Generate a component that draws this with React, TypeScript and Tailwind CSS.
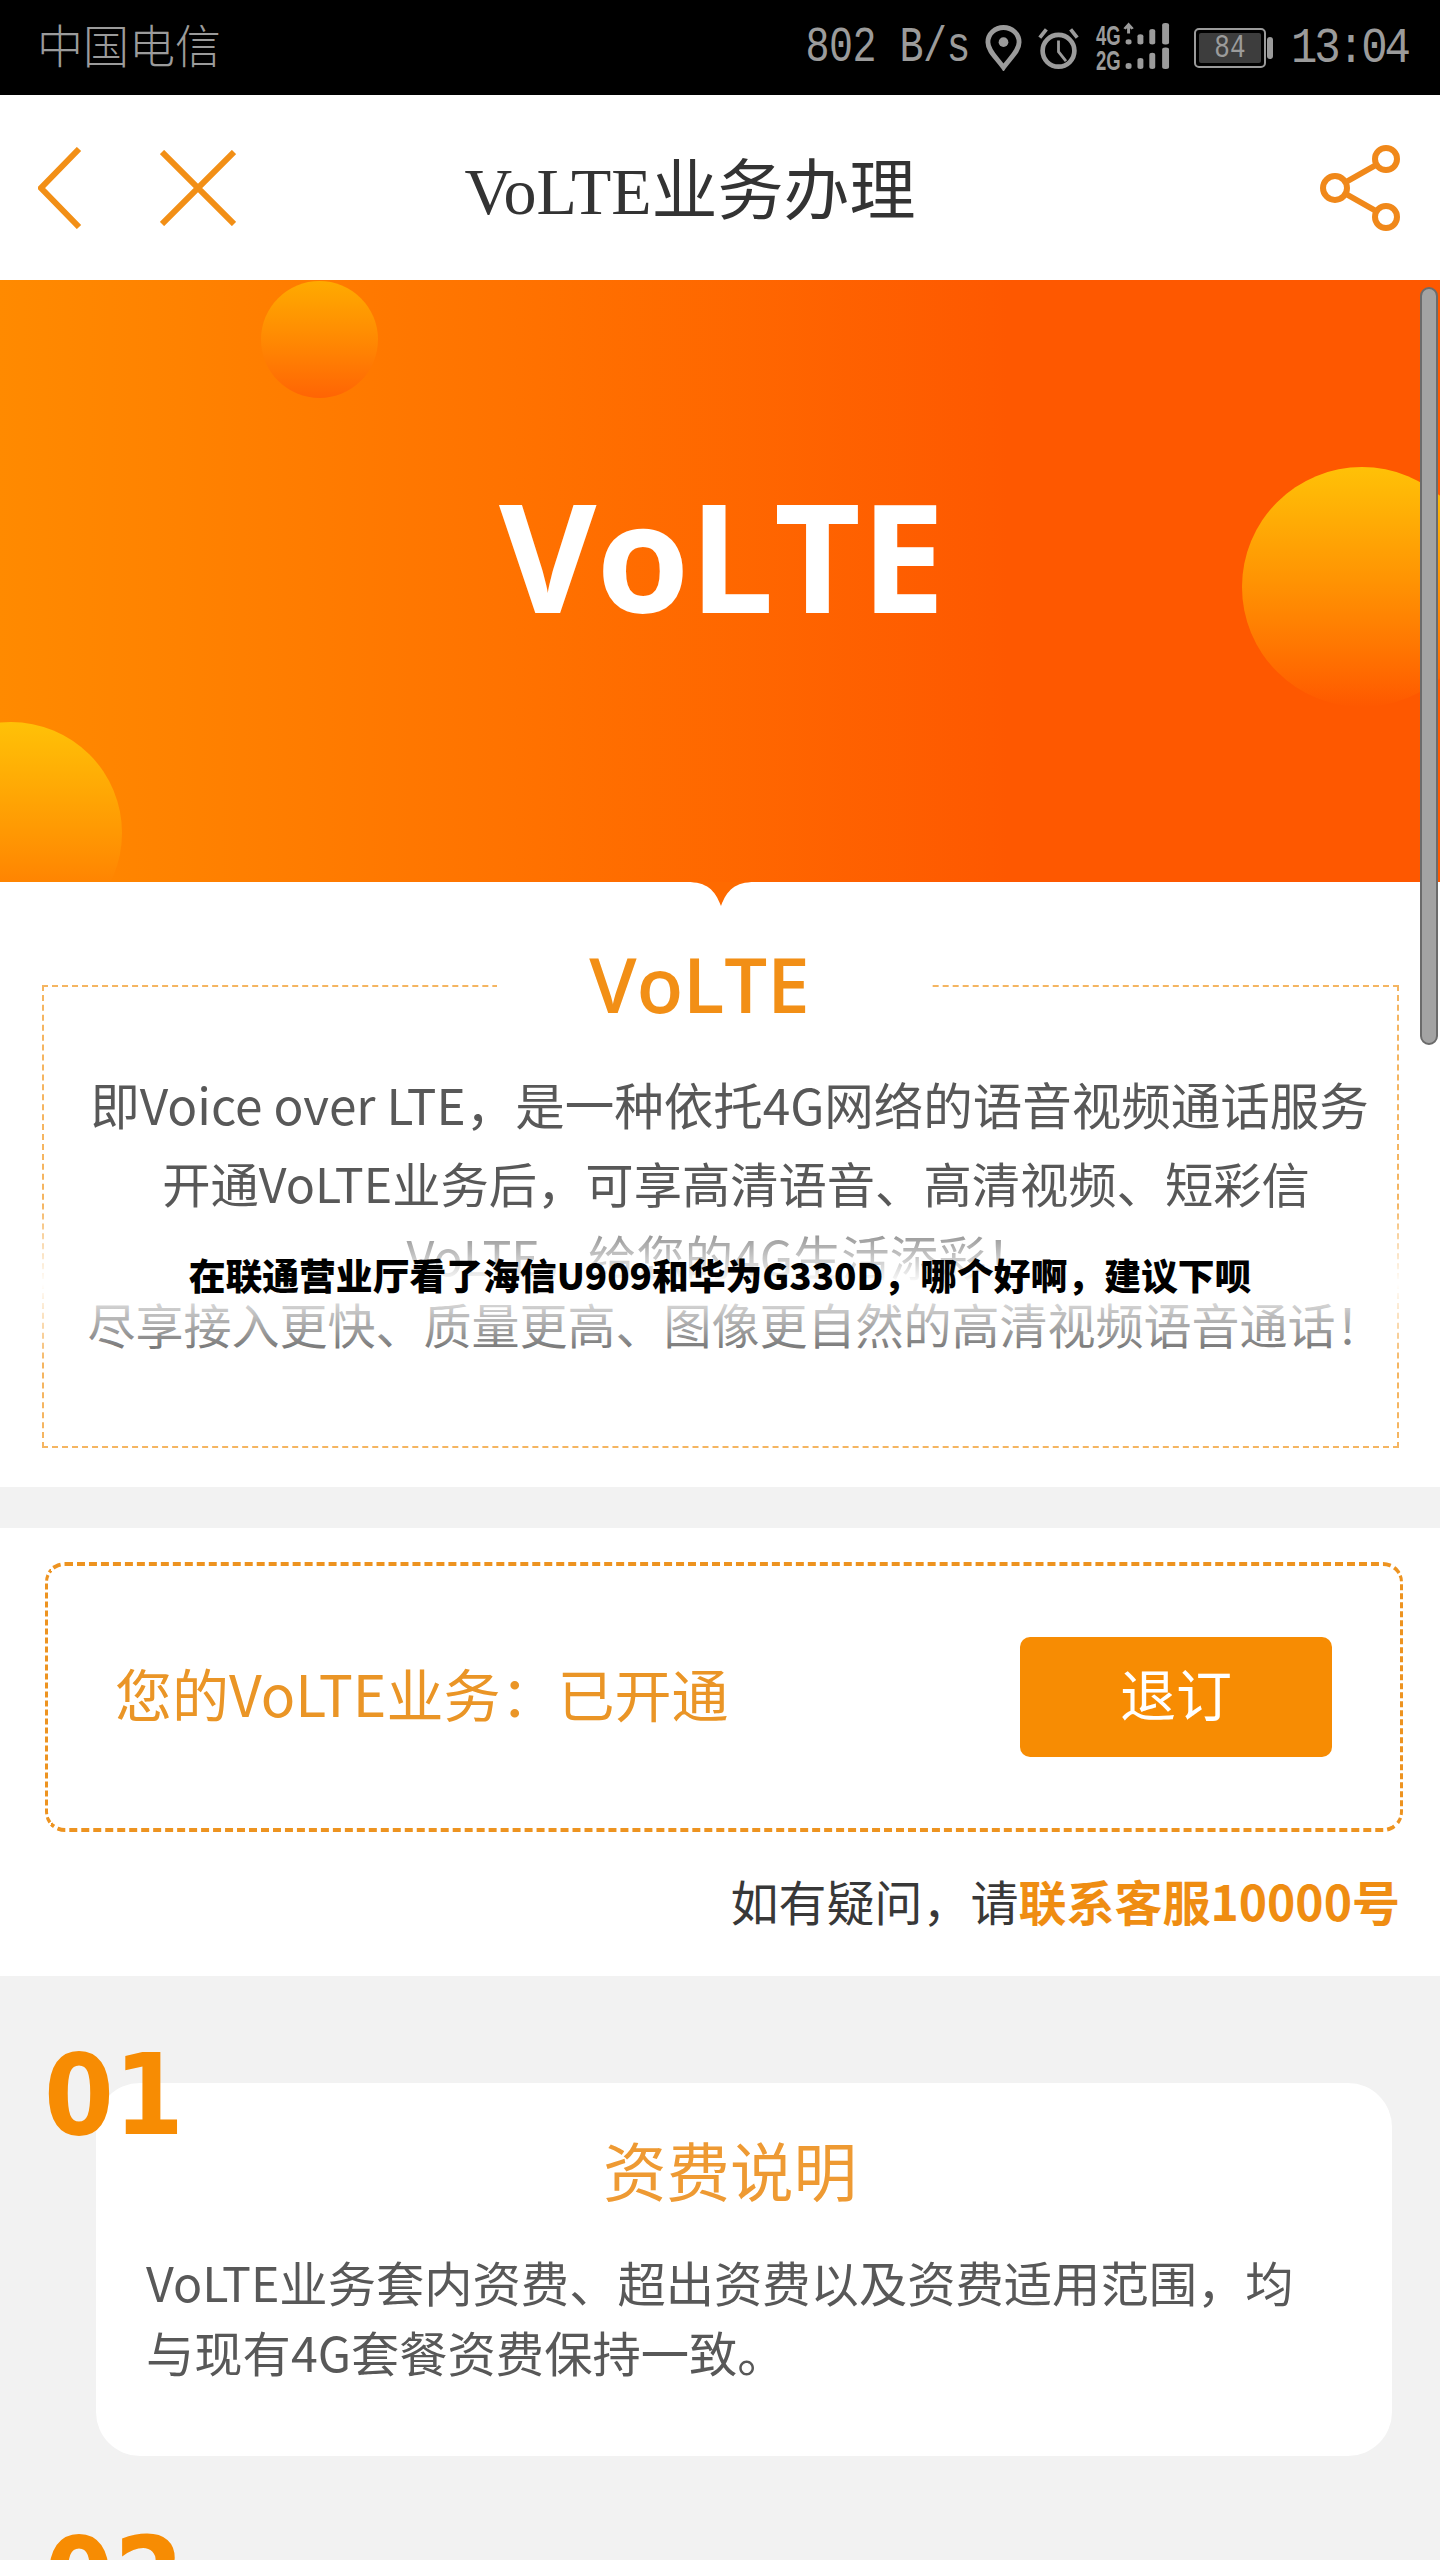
const cjk = "font-['Noto_Sans_CJK_SC','Noto_Sans',sans-serif]";
const mono = "font-['Liberation_Mono',monospace]";

function Num({ text, cls }: { text: string; cls: string }) {
  return (
    <span className={`absolute left-[44px] origin-left scale-x-[0.89] font-['DejaVu_Sans',sans-serif] font-bold text-[113px] leading-none text-[#f78c03] ${cls}`}>{text}</span>
  );
}

export default function App() {
  return (
    <div className={`relative w-[1440px] h-[2560px] overflow-hidden bg-[#f2f2f2] ${cjk}`}>
      {/* status bar */}
      <div className="h-[95px] bg-black flex items-center justify-between pl-[37px] pr-[32px] text-[#9b9b9b]">
        <span className="text-[46px] leading-none font-['Liberation_Serif','Noto_Sans_CJK_SC',serif] font-light">中国电信</span>
        <div className="flex items-center">
          <span className={`${mono} text-[40px] leading-none tracking-[-0.5px] scale-y-[1.25] mr-[15px]`}>802 B/s</span>
          <svg width="37" height="46" viewBox="0 0 38 46" className="mr-[15px]" fill="none"><path d="M19 43 C12 33 3 26 3 17 A16 15 0 0 1 35 17 C35 26 26 33 19 43Z" stroke="#9b9b9b" strokeWidth="5"/><circle cx="19" cy="17" r="5" fill="#9b9b9b"/></svg>
          <svg width="43" height="46" viewBox="0 0 46 46" className="mr-[16px]" fill="none" stroke="#9b9b9b"><circle cx="23" cy="26" r="17" strokeWidth="5"/><path d="M23 15V27L31 37" strokeWidth="3"/><path d="M3 12L10 3M43 12L36 3" strokeWidth="4"/></svg>
          <svg width="77" height="49" viewBox="0 0 78 66" preserveAspectRatio="none" className="mr-[21px] overflow-visible" fill="#9b9b9b">
            <text x="0" y="29" fontFamily="Liberation Sans" fontWeight="700" fontSize="36" textLength="25" lengthAdjust="spacingAndGlyphs">4G</text>
            <text x="0" y="63" fontFamily="Liberation Sans" fontWeight="700" fontSize="36" textLength="25" lengthAdjust="spacingAndGlyphs">2G</text>
            <rect x="30" y="22" width="6" height="7" rx="3"/><rect x="42" y="15" width="6" height="14" rx="3"/><rect x="54" y="8" width="6" height="21" rx="3"/><rect x="67" y="0" width="7" height="29" rx="3"/>
            <rect x="30" y="54" width="6" height="8" rx="3"/><rect x="42" y="47" width="6" height="15" rx="3"/><rect x="54" y="40" width="6" height="22" rx="3"/><rect x="67" y="33" width="7" height="29" rx="3"/>
            <path d="M33 2V14M29 8L33 2L37 8" stroke="#9b9b9b" strokeWidth="3" fill="none"/>
          </svg>
          <div className="w-[72px] h-[40px] border-2 border-[#9b9b9b] rounded-[5px] p-[3px] mr-[1px]">
            <div className={`h-full bg-[#3d3d3d] rounded-[2px] flex items-center justify-center ${mono} text-[26px] leading-none`}><span className="scale-y-[1.25]">84</span></div>
          </div>
          <div className="w-[6px] h-[22px] rounded-[3px] bg-[#9b9b9b] mr-[18px]"></div>
          <span className={`${mono} text-[44px] leading-none tracking-[-3px] scale-y-[1.15]`}>13:04</span>
        </div>
      </div>

      {/* nav */}
      <div className="h-[185px] bg-white flex items-center pl-[38px] pr-[40px] justify-between">
        <div className="flex items-center gap-[78px]">
          <svg width="44" height="82" viewBox="0 0 44 82" fill="none" stroke="#f28f16" strokeWidth="6"><path d="M41 2L3 41L41 80"/></svg>
          <svg width="76" height="76" viewBox="0 0 76 76" fill="none" stroke="#f28f16" strokeWidth="6"><path d="M2 2L74 74M74 2L2 74"/></svg>
        </div>
        <span className="mr-[176px] pt-[8px] text-[66px] leading-none text-[#333] font-['Liberation_Serif','Noto_Sans_CJK_SC',serif]">VoLTE业务办理</span>
        <svg width="80" height="86" viewBox="0 0 80 86" fill="none" stroke="#f0881a" strokeWidth="6"><circle cx="15" cy="43" r="12"/><circle cx="66" cy="14" r="11"/><circle cx="66" cy="72" r="11"/><path d="M26 37L56 20M26 49L56 66"/></svg>
      </div>

      {/* hero */}
      <div className="relative h-[602px] overflow-hidden bg-gradient-to-r from-[#ff8a00] to-[#fe5800] to-70% flex items-center justify-center pb-[52px]">
        <div className="absolute left-[261px] top-[1px] w-[117px] h-[117px] rounded-full bg-gradient-to-b from-[#ffaa00] to-[#ff6404]"></div>
        <div className="absolute left-[1242px] top-[187px] w-[240px] h-[240px] rounded-full bg-gradient-to-b from-[#ffc107] to-[#fe5800]"></div>
        <div className="absolute left-[-100px] top-[442px] w-[222px] h-[222px] rounded-full bg-gradient-to-b from-[#ffc107] to-[#ff6a00]"></div>
        <span className="relative pl-[4px] font-['Open_Sans',sans-serif] font-bold text-[150px] leading-none text-white">VoLTE</span>
      </div>

      {/* intro */}
      <div className="relative h-[605px] bg-white px-[42px] pt-[103px]">
        <svg className="absolute left-[687px] top-0" width="68" height="26" viewBox="0 0 68 26"><path d="M0 0C20 0 28 8 34 24C40 8 48 0 68 0Z" fill="#fe6a00"/></svg>
        <div className="w-[1357px] h-[463px] border-2 border-dashed border-[#f5b561]">
          <div className="-mt-[40px] ml-[453px] w-[435px] h-[74px] bg-white text-center pr-[30px] text-[76px] leading-[74px] font-semibold text-[#f28f16] font-['Open_Sans','Noto_Sans_CJK_SC',sans-serif]">VoLTE</div>
          <div className="flex flex-col items-center text-[#585858] text-[48.3px] pt-[44px]">
            <p className="whitespace-nowrap leading-[78px] pl-[18px] text-[49.5px]">即Voice over LTE，是一种依托4G网络的语音视频通话服务</p>
            <p className="whitespace-nowrap leading-[78px] pl-[31px]">开通VoLTE业务后，可享高清语音、高清视频、短彩信</p>
            <p className="whitespace-nowrap leading-[68px]">VoLTE，给您的4G生活添彩！</p>
            <p className="whitespace-nowrap leading-[68px] pl-[30px] text-[48px]">尽享接入更快、质量更高、图像更自然的高清视频语音通话！</p>
          </div>
        </div>
        {/* white fade behind the caption */}
        <div className="absolute left-0 right-0 top-[322px] h-[160px] bg-gradient-to-b from-white/0 via-white to-white/0"></div>
      </div>

      <div className="h-[41px]"></div>

      {/* status */}
      <div className="h-[448px] bg-white pl-[45px] pr-[40px] pt-[34px]">
        <div className="h-[270px] w-[1358px] border-x-[3px] border-y-[4px] border-dashed border-[#ed9320] rounded-[20px] flex items-center justify-between pl-[67px] pr-[68px]">
          <span className="text-[57px] leading-none text-[#ea9526] pb-[10px]">您的VoLTE业务：已开通</span>
          <button className="w-[312px] h-[120px] bg-[#f78c03] rounded-[10px] text-white text-[56px] leading-none pb-[10px]">退订</button>
        </div>
        <p className="mt-[33px] text-right text-[48px] leading-[70px] text-[#383838]">如有疑问，请<span className="font-bold text-[#ef8d12]">联系客服10000号</span></p>
      </div>

      {/* steps */}
      <div className="relative px-[96px] pt-[107px]">
        <div className="w-[1296px] h-[373px] bg-white rounded-[44px] px-[50px] pt-[45px]">
          <h3 className="text-center text-[63.5px] leading-[80px] font-normal text-[#ee9a33] pr-[28px]">资费说明</h3>
          <p className="mt-[38px] text-[48.3px] leading-[70px] text-[#585858] whitespace-nowrap">VoLTE业务套内资费、超出资费以及资费适用范围，均<br />与现有4G套餐资费保持一致。</p>
        </div>
        <Num text="01" cls="top-[63px]" />
        <Num text="02" cls="top-[546px]" />
      </div>

      {/* scrollbar */}
      <div className="absolute left-[1420px] top-[287px] w-[18px] h-[758px] rounded-[9px] bg-[#a3a3a3] border-2 border-[#6b6b6b]"></div>

      {/* caption overlay */}
      <div className="absolute left-0 right-0 top-[1249px] text-center text-[36.8px] leading-[50px] font-black text-black whitespace-nowrap">在联通营业厅看了海信U909和华为G330D，哪个好啊，建议下呗</div>
    </div>
  );
}
